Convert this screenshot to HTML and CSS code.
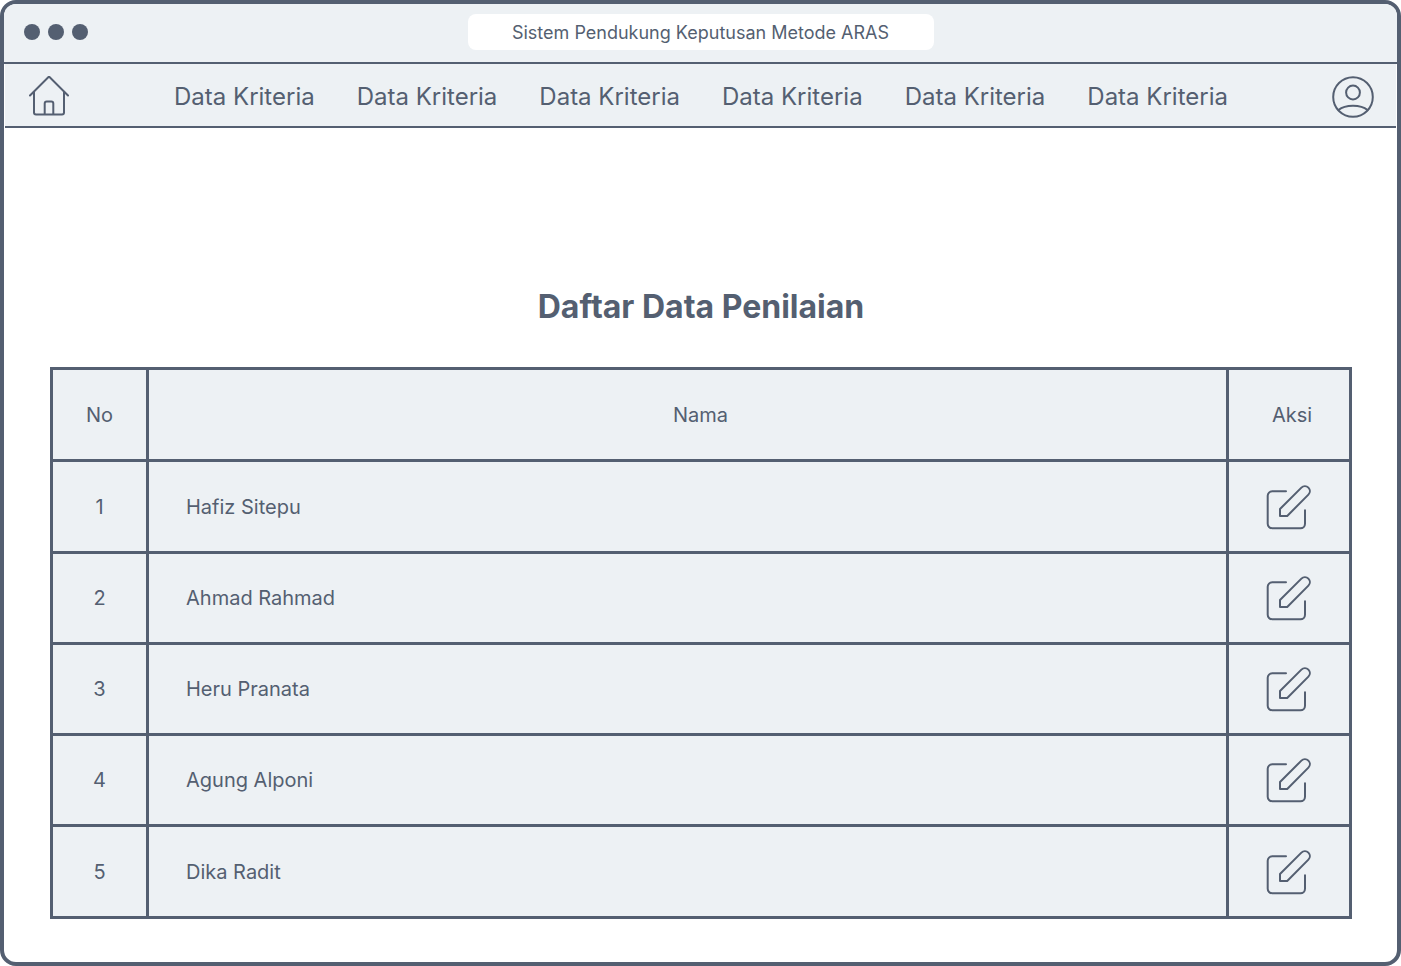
FILE: index.html
```html
<!DOCTYPE html>
<html lang="id">
<head>
<meta charset="utf-8">
<meta name="viewport" content="width=device-width, initial-scale=1">
<title>Sistem Pendukung Keputusan Metode ARAS</title>
<link rel="stylesheet" href="styles.css">
</head>
<body>
<svg class="sprite" aria-hidden="true">
  <symbol id="edit" viewBox="0 0 46 46">
    <path d="M20 7.3H6.2a4.5 4.5 0 0 0-4.5 4.5v28a4.5 4.5 0 0 0 4.5 4.5h28.3a4.5 4.5 0 0 0 4.5-4.5V26.3"/>
    <path d="M14 32v-7L35.4 3.6a4.9 4.9 0 0 1 7 7L21.2 32z"/>
  </symbol>
</svg>
<div class="window">
  <header class="titlebar">
    <div class="dots"><span class="dot"></span><span class="dot"></span><span class="dot"></span></div>
    <p class="address">Sistem Pendukung Keputusan Metode ARAS</p>
  </header>
  <nav class="nav" aria-label="Menu utama">
    <a class="nav-icon" href="#" aria-label="Beranda">
      <svg class="icon" width="42" height="42" viewBox="0 1 42 42"><path d="M2 20.5 21 1.5l19 19M6 17v20.500a2 2 0 0 0 2 2h26a2 2 0 0 0 2-2V17M16.700 39.500v-11a2 2 0 0 1 2-2h4.600a2 2 0 0 1 2 2v11"/></svg>
    </a>
    <ul class="menu">
      <li><a href="#">Data Kriteria</a></li>
      <li><a href="#">Data Kriteria</a></li>
      <li><a href="#">Data Kriteria</a></li>
      <li><a href="#">Data Kriteria</a></li>
      <li><a href="#">Data Kriteria</a></li>
      <li><a href="#">Data Kriteria</a></li>
    </ul>
    <a class="nav-icon" href="#" aria-label="Profil">
      <svg class="icon" width="42" height="42" viewBox="0 0 42 42"><circle cx="21" cy="21" r="19.800"/><circle cx="21" cy="16.500" r="6.900"/><path d="M6.500 34c3.500-3 9-4.300 14.500-4.300S32 31 35.500 34"/></svg>
    </a>
  </nav>
  <main class="content">
    <h1 class="heading">Daftar Data Penilaian</h1>
    <table class="table">
      <thead>
        <tr><th class="col-no" scope="col">No</th><th class="col-name" scope="col">Nama</th><th class="col-action" scope="col">Aksi</th></tr>
      </thead>
      <tbody>
        <tr><td>1</td><td class="name">Hafiz Sitepu</td><td><button class="edit" type="button" aria-label="Edit Hafiz Sitepu"><svg class="icon" width="46" height="46"><use href="#edit"/></svg></button></td></tr>
        <tr><td>2</td><td class="name">Ahmad Rahmad</td><td><button class="edit" type="button" aria-label="Edit Ahmad Rahmad"><svg class="icon" width="46" height="46"><use href="#edit"/></svg></button></td></tr>
        <tr><td>3</td><td class="name">Heru Pranata</td><td><button class="edit" type="button" aria-label="Edit Heru Pranata"><svg class="icon" width="46" height="46"><use href="#edit"/></svg></button></td></tr>
        <tr><td>4</td><td class="name">Agung Alponi</td><td><button class="edit" type="button" aria-label="Edit Agung Alponi"><svg class="icon" width="46" height="46"><use href="#edit"/></svg></button></td></tr>
        <tr><td>5</td><td class="name">Dika Radit</td><td><button class="edit" type="button" aria-label="Edit Dika Radit"><svg class="icon" width="46" height="46"><use href="#edit"/></svg></button></td></tr>
      </tbody>
    </table>
  </main>
</div>
</body>
</html>
```
FILE: styles.css
```css
:root {
  --ink: #545f71;
  --panel: #edf1f4;
}

* {
  box-sizing: border-box;
}

body {
  margin: 0;
  background: #fff;
  color: var(--ink);
  font-family: Inter, "Liberation Sans", sans-serif;
}

.sprite {
  display: none;
}

.window {
  min-height: 100vh;
  border: 4px solid var(--ink);
  border-radius: 16px;
  background: #fff;
  overflow: hidden;
}

.titlebar {
  display: grid;
  grid-template-columns: 1fr auto 1fr;
  align-items: center;
  height: 60px;
  padding: 0 20px 2px;
  border-bottom: 2px solid var(--ink);
  background: var(--panel);
}

.dots {
  display: flex;
  gap: 8px;
}

.dot {
  width: 16px;
  height: 16px;
  border-radius: 50%;
  background: var(--ink);
}

.address {
  width: 466px;
  margin: 0;
  padding-top: 2px;
  border-radius: 8px;
  background: #fff;
  font-size: 18px;
  line-height: 34px;
  text-align: center;
}

.nav {
  display: flex;
  align-items: center;
  justify-content: space-between;
  height: 64px;
  margin: 0 1px;
  padding: 3px 22px 0 23px;
  border-bottom: 2px solid var(--ink);
  background: var(--panel);
}

.nav-icon {
  display: flex;
}

.icon {
  display: block;
  fill: none;
  stroke: var(--ink);
  stroke-width: 2;
  stroke-linecap: round;
  stroke-linejoin: round;
}

.menu {
  display: flex;
  gap: 42px;
  margin: 0;
  padding: 0;
  list-style: none;
}

.menu a {
  color: inherit;
  font-size: 24px;
  line-height: 32px;
  text-decoration: none;
}

.content {
  padding: 159px 45px 43px 46px;
}

.heading {
  margin: 0 0 40px;
  font-size: 32px;
  font-weight: 700;
  line-height: 40px;
  text-align: center;
}

.table {
  width: 100%;
  border-collapse: collapse;
  table-layout: fixed;
  background: var(--panel);
  font-size: 20px;
  line-height: 24px;
}

.table th,
.table td {
  height: 91px;
  padding: 0;
  border: 3px solid var(--ink);
  font-weight: 400;
  text-align: center;
}

.table th,
.table tr:first-child td,
.table tr:last-child td {
  height: 92px;
}

.table .col-no {
  width: 96px;
}

.table .col-name {
  padding-left: 26px;
}

.table .col-action {
  width: 123px;
  padding-left: 6px;
}

.table .name {
  padding-left: 37px;
  text-align: left;
}

.edit {
  display: block;
  margin: 0 auto;
  padding: 0;
  border: 0;
  background: none;
  cursor: pointer;
}
```
